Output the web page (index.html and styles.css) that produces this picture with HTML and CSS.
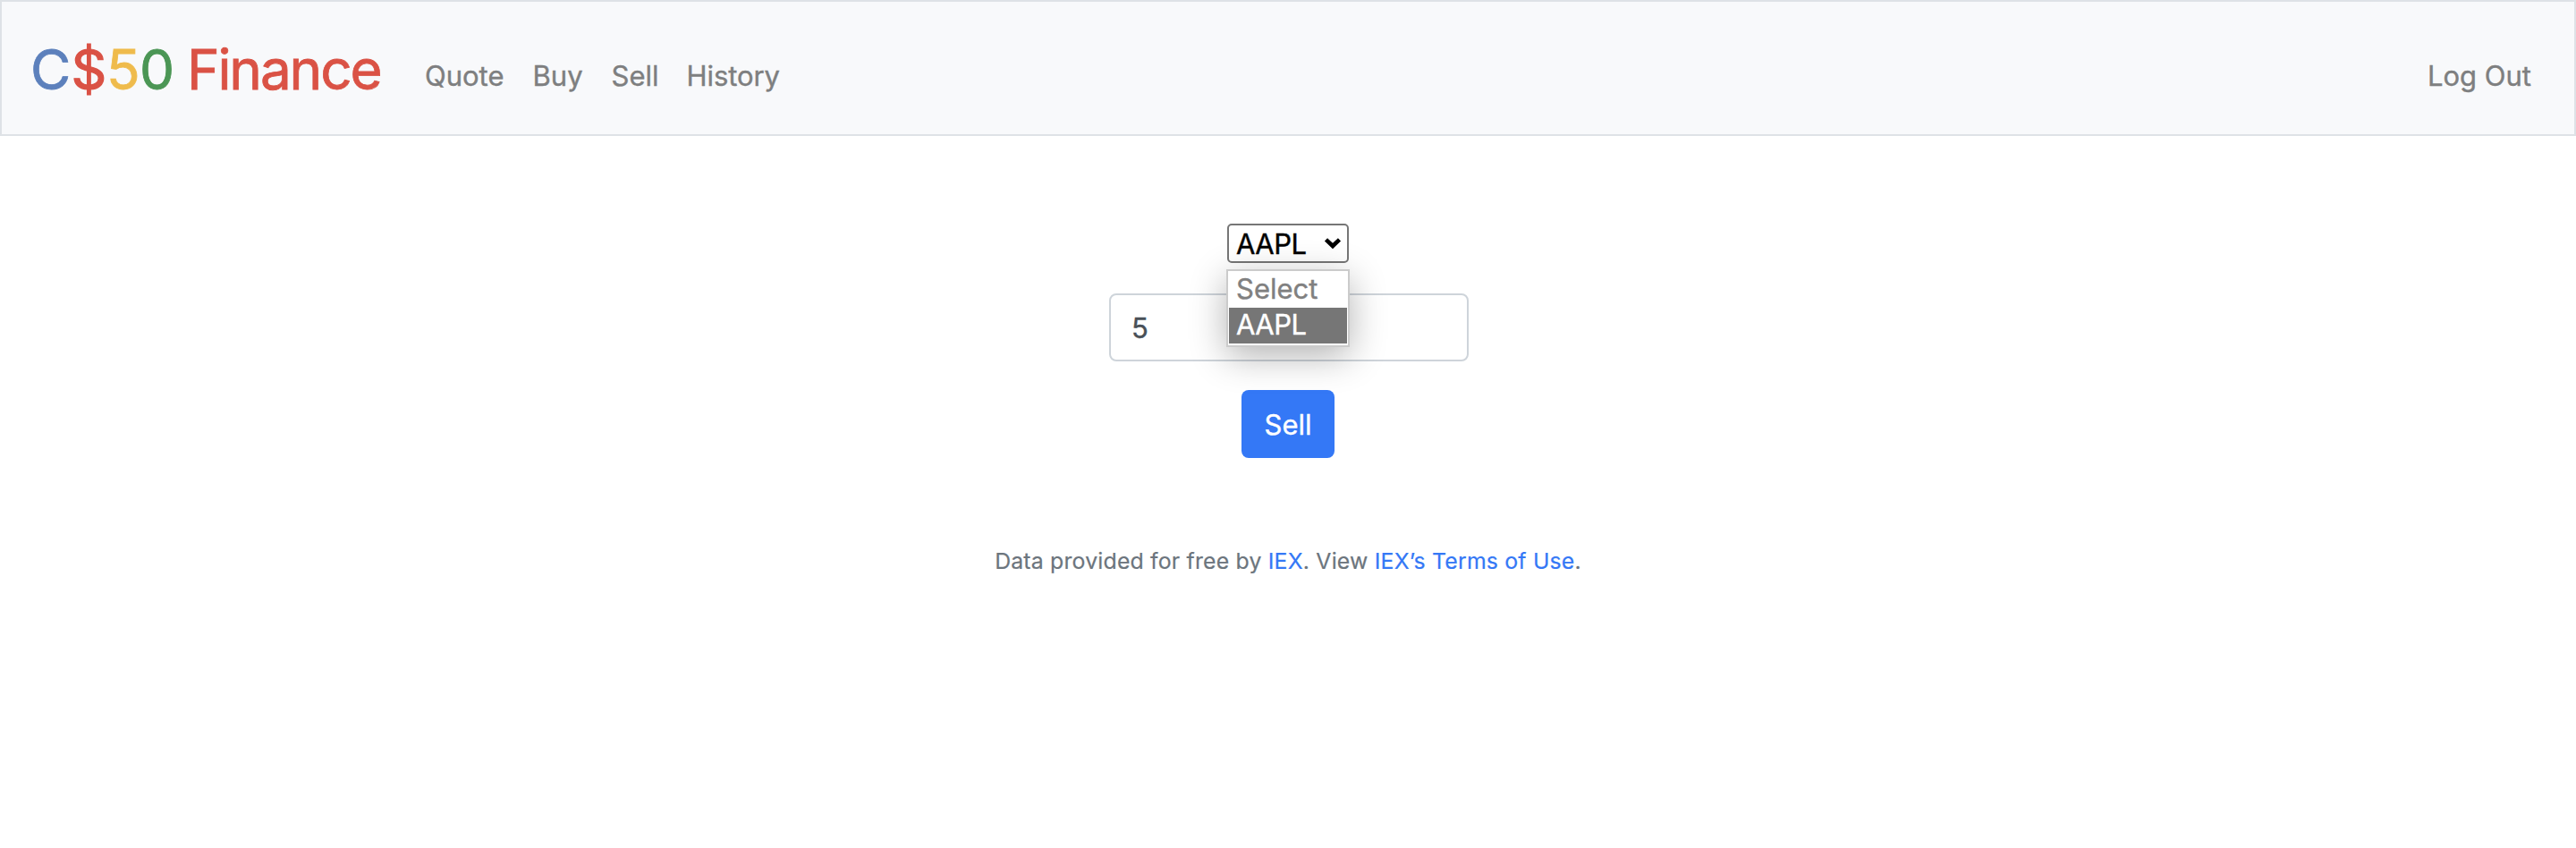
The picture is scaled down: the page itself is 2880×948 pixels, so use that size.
FILE: index.html
```html
<!DOCTYPE html>
<html lang="en">
<head>
<meta charset="utf-8">
<title>C$50 Finance: Sell</title>
<link rel="stylesheet" href="styles.css">
</head>
<body>
<nav class="navbar">
  <a class="brand"><span class="blue">C</span><span class="red dollar">$</span><span class="yellow">5</span><span class="green">0</span> <span class="red name">Finance</span></a>
  <ul class="links">
    <li class="quote">Quote</li>
    <li class="buy">Buy</li>
    <li class="sell">Sell</li>
    <li class="history">History</li>
  </ul>
  <a class="logout">Log Out</a>
</nav>
<main class="main">
  <div class="picker">
    <div class="select"><span class="value">AAPL</span>
      <svg class="chevron" width="20" height="14" viewBox="0 0 20 14"><path d="M2.5 2.8 L10 10 L17.5 2.8" fill="none" stroke="#000" stroke-width="4.6"/></svg>
    </div>
    <div class="menu">
      <div class="option placeholder">Select</div>
      <div class="option active">AAPL</div>
    </div>
  </div>
  <div class="shares">5</div>
  <div class="button">Sell</div>
</main>
<footer class="footer">Data provided for free by <a class="link">IEX</a>. View <a class="link">IEX’s Terms of Use</a>.</footer>
</body>
</html>
```
FILE: styles.css
```css
* { box-sizing: border-box; }
body {
  margin: 0;
  background: #fff;
  color: #212529;
  font-family: Inter, "Liberation Sans", sans-serif;
  font-size: 31px;
  line-height: 48px;
  -webkit-text-stroke: .4px currentColor;
}
.navbar {
  display: flex;
  align-items: flex-start;
  height: 152px;
  padding: 0 48px 0 32px;
  border: 2px solid #dee2e6;
  background: #f8f9fb;
}
.brand {
  width: 441px;
  padding-top: 28px;
  font-size: 62px;
  line-height: 96px;
  letter-spacing: -1.3px;
  white-space: nowrap;
  -webkit-text-stroke: .8px currentColor;
}
.blue { color: #5c80bc; letter-spacing: .2px; }
.red { color: #da5245; }
.yellow { color: #efbb4c; letter-spacing: -.7px; }
.green { color: #4b9655; }
.dollar { letter-spacing: -.3px; -webkit-text-stroke-width: 1.2px; }
.name { margin-left: -1px; letter-spacing: -2.1px; }
.links {
  display: flex;
  gap: 32px;
  margin: 0;
  padding: 59px 0 0;
  list-style: none;
  color: #7e7f80;
}
.history { margin-left: -1px; letter-spacing: -.1px; }
.logout {
  margin-left: auto;
  padding-top: 59px;
  color: #7e7f80;
}
.main {
  display: flex;
  flex-direction: column;
  align-items: center;
  padding-top: 98px;
}
.picker { position: relative; width: 136px; }
.select {
  display: flex;
  align-items: center;
  justify-content: space-between;
  height: 44px;
  padding: 0 6px 0 8px;
  border: 2px solid #767676;
  border-radius: 5px;
  background: #fff;
  color: #000;
  line-height: 40px;
}
.value { padding-top: 1px; letter-spacing: -.5px; }
.menu {
  position: absolute;
  top: 51px;
  left: -1px;
  width: 138px;
  padding: 1px 1px 2px;
  border: 2px solid #cbcbcb;
  background: #fff;
  box-shadow: 0 10px 40px rgba(0, 0, 0, .3);
}
.option { height: 40px; padding-left: 8px; line-height: 38px; }
.placeholder { color: #808080; }
.active { background: #767676; color: #fff; letter-spacing: -.5px; }
.shares {
  width: 402px;
  height: 76px;
  margin: 34px 0 0 2px;
  padding: 13px 23px;
  border: 2px solid #ced4da;
  border-radius: 8px;
  color: #495057;
}
.button {
  width: 104px;
  height: 76px;
  margin-top: 32px;
  border-radius: 8px;
  background: #3478f6;
  color: #fff;
  line-height: 77px;
  text-align: center;
}
.footer {
  padding-top: 96px;
  color: #6c757d;
  font-size: 24.8px;
  line-height: 38px;
  letter-spacing: .2px;
  text-align: center;
  -webkit-text-stroke-width: .2px;
}
.link { color: #3478f6; }
.brand span, .link { -webkit-text-stroke-color: currentColor; }
```
